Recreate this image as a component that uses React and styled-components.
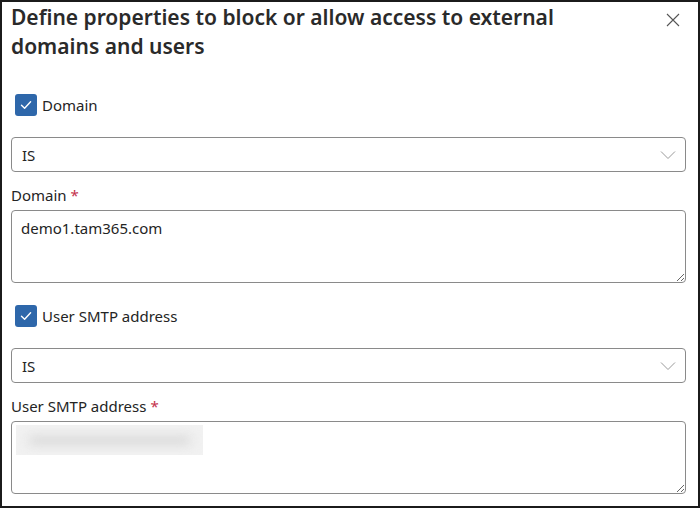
import React from "react";
import styled, { createGlobalStyle } from "styled-components";

const GlobalStyle = createGlobalStyle`
  html, body {
    margin: 0;
    padding: 0;
    background: #ffffff;
  }
  body {
    font-family: "Noto Sans", "Open Sans", Arial, sans-serif;
    color: #242424;
  }
`;

const Panel = styled.div`
  box-sizing: border-box;
  width: 700px;
  height: 508px;
  border: 2px solid #1b1b1b;
  padding: 1px 12px 0 9px;
  display: flex;
  flex-direction: column;
  overflow: hidden;
`;

const Header = styled.div`
  display: flex;
  align-items: flex-start;
  justify-content: space-between;
`;

const Title = styled.h1`
  margin: 0;
  width: 580px;
  font-size: 21px;
  line-height: 29px;
  font-weight: 600;
  color: #2a2a2a;
`;

const CloseButton = styled.button`
  border: none;
  background: none;
  padding: 0;
  margin: 10px 6px 0 0;
  width: 14px;
  height: 14px;
  display: flex;
  cursor: pointer;
`;

const CheckRow = styled.label`
  display: flex;
  align-items: center;
  gap: 5px;
  margin: ${(p) => p.$top}px 0 0 4px;
  font-size: 15px;
  line-height: 22px;
`;

const Box = styled.span`
  box-sizing: border-box;
  width: 22px;
  height: 22px;
  border-radius: 3px;
  background: #2e67aa;
  display: flex;
  align-items: center;
  justify-content: center;
`;

const Select = styled.div`
  box-sizing: border-box;
  margin-top: 21px;
  height: 35px;
  border: 1px solid #8a8a8a;
  border-radius: 4px;
  display: flex;
  align-items: center;
  justify-content: space-between;
  padding: 0 9px 0 10px;
  font-size: 15px;
`;

const FieldLabel = styled.div`
  margin-top: 12px;
  font-size: 15px;
  line-height: 22px;
`;

const Required = styled.span`
  color: #c4314b;
  margin-left: 4px;
`;

const AreaWrap = styled.div`
  position: relative;
  margin-top: 4px;
`;

const Area = styled.textarea`
  box-sizing: border-box;
  display: block;
  width: 100%;
  height: 73px;
  border: 1px solid #8a8a8a;
  border-radius: 4px;
  padding: 6px 9px;
  font-family: inherit;
  font-size: 15px;
  line-height: 22px;
  color: #242424;
  resize: vertical;
  outline: none;
`;

const Redacted = styled.span`
  position: absolute;
  left: 5px;
  top: 4px;
  width: 187px;
  height: 30px;
  background: #eeeeee;
  box-shadow: inset 0 0 10px 4px #f2f2f2;
`;

const Smudge = styled.span`
  position: absolute;
  left: 14px;
  right: 14px;
  top: 11px;
  height: 9px;
  border-radius: 6px;
  background: #dddddd;
  filter: blur(4px);
`;

const Check = () => (
  <svg width="14" height="14" viewBox="0 0 14 14">
    <path d="M2.5 7.3 L5.6 10.3 L11.6 3.8" fill="none" stroke="#fff" strokeWidth="1.4" strokeLinecap="round" strokeLinejoin="round" />
  </svg>
);

const Chevron = () => (
  <svg width="16" height="10" viewBox="0 0 16 10">
    <path d="M1 1.5 L8 8.5 L15 1.5" fill="none" stroke="#9a9a9a" strokeWidth="1" />
  </svg>
);

const Section = ({ label, top }) => (
  <>
    <CheckRow $top={top}>
      <Box>
        <Check />
      </Box>
      {label}
    </CheckRow>
    <Select>
      <span>IS</span>
      <Chevron />
    </Select>
  </>
);

export default function App() {
  return (
    <>
      <GlobalStyle />
      <Panel>
        <Header>
          <Title>Define properties to block or allow access to external domains and users</Title>
          <CloseButton aria-label="Close">
            <svg width="14" height="14" viewBox="0 0 14 14">
              <path d="M1 1 L13 13 M13 1 L1 13" stroke="#555" strokeWidth="1.1" />
            </svg>
          </CloseButton>
        </Header>

        <Section label="Domain" top={33} />
        <FieldLabel>
          Domain<Required>*</Required>
        </FieldLabel>
        <AreaWrap>
          <Area defaultValue="demo1.tam365.com" />
        </AreaWrap>

        <Section label="User SMTP address" top={22} />
        <FieldLabel>
          User SMTP address<Required>*</Required>
        </FieldLabel>
        <AreaWrap>
          <Area defaultValue="" />
          <Redacted>
            <Smudge />
          </Redacted>
        </AreaWrap>
      </Panel>
    </>
  );
}
